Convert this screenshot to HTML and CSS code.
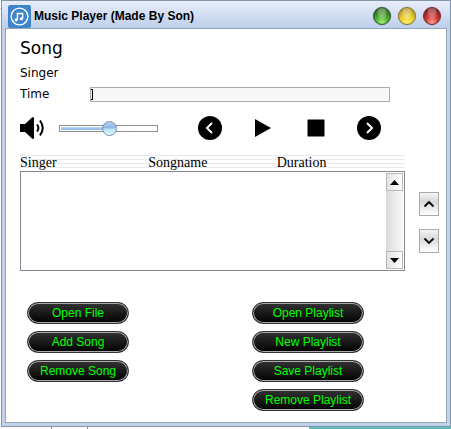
FILE: index.html
```html
<!DOCTYPE html>
<html lang="en">
<head>
<meta charset="utf-8">
<title>Music Player (Made By Son)</title>
<link rel="stylesheet" href="styles.css">
</head>
<body>
<main class="window">
  <header class="titlebar">
    <svg class="logo" viewBox="0 0 22 22" aria-hidden="true">
      <rect width="22" height="22" rx="2" fill="#3f85cb"/>
      <circle cx="11" cy="11" r="8" fill="none" stroke="#fff" stroke-width="1.3"/>
      <path d="M9 14V8.200H14V13" fill="none" stroke="#fff" stroke-width="1.4"/>
      <circle cx="7.800" cy="14.200" r="1.500" fill="#fff"/>
      <circle cx="12.800" cy="13.200" r="1.500" fill="#fff"/>
    </svg>
    <h1 class="title">Music Player (Made By Son)</h1>
    <div class="lights">
      <button class="light green" aria-label="Minimize"></button>
      <button class="light yellow" aria-label="Maximize"></button>
      <button class="light red" aria-label="Close"></button>
    </div>
  </header>
  <div class="content">
    <h2 class="song">Song</h2>
    <p class="singer">Singer</p>
    <div class="time-row">
      <label for="time">Time</label>
      <input class="time" id="time" type="text">
    </div>
    <div class="transport">
      <svg class="volume-icon" viewBox="0 0 25 24" aria-hidden="true">
        <path d="M0 8h5l7-6.500q2-1.500 2 1v19q0 2.500-2 1L5 16H0z"/>
        <path d="M17 8.500q2.800 3.500 0 7M20 4.500q5.500 7.500 0 15" fill="none" stroke="#000" stroke-width="2"/>
      </svg>
      <input class="volume" type="range" min="0" max="100" value="51" aria-label="Volume">
      <button class="control previous" aria-label="Previous">
        <svg viewBox="0 0 24 24"><circle cx="12" cy="12" r="12"/><path d="M14 7l-5 5 5 5" fill="none" stroke="#fff" stroke-width="2"/></svg>
      </button>
      <button class="control" aria-label="Play">
        <svg viewBox="0 0 24 24"><path d="M4 3l16 9-16 9z"/></svg>
      </button>
      <button class="control" aria-label="Stop">
        <svg viewBox="0 0 24 24"><path d="M3.500 3.500h17v17h-17z"/></svg>
      </button>
      <button class="control" aria-label="Next">
        <svg viewBox="0 0 24 24"><circle cx="12" cy="12" r="12"/><path d="M10 7l5 5-5 5" fill="none" stroke="#fff" stroke-width="2"/></svg>
      </button>
    </div>
    <section class="playlist">
      <div class="list">
        <table class="columns">
          <thead><tr><th>Singer</th><th>Songname</th><th>Duration</th></tr></thead>
        </table>
        <div class="rows">
          <div class="scrollbar">
            <button class="scroll" aria-label="Scroll up"><svg viewBox="0 0 9 5"><path d="M0 5L4.500 0 9 5z"/></svg></button>
            <button class="scroll" aria-label="Scroll down"><svg viewBox="0 0 9 5"><path d="M0 0L4.500 5 9 0z"/></svg></button>
          </div>
        </div>
      </div>
      <div class="movers">
        <button class="mover" aria-label="Move up"><svg viewBox="0 0 10 6"><path d="M.5 5.500L5 1l4.500 4.500"/></svg></button>
        <button class="mover" aria-label="Move down"><svg viewBox="0 0 10 6"><path d="M.5 .5L5 5 9.500 .5"/></svg></button>
      </div>
    </section>
    <section class="actions">
      <div class="group files">
        <button class="action">Open File</button>
        <button class="action">Add Song</button>
        <button class="action">Remove Song</button>
      </div>
      <div class="group playlists">
        <button class="action">Open Playlist</button>
        <button class="action">New Playlist</button>
        <button class="action">Save Playlist</button>
        <button class="action">Remove Playlist</button>
      </div>
    </section>
  </div>
</main>
</body>
</html>
```
FILE: styles.css
```css
* {
  box-sizing: border-box;
}

html {
  background:
    linear-gradient(#5fbcb4, #5fbcb4) 309px 100% / 100% 2px no-repeat,
    linear-gradient(#888, #888) 51px 100% / 1px 2px no-repeat,
    linear-gradient(#888, #888) 87px 100% / 1px 2px no-repeat,
    linear-gradient(#ccc, #ccc) 0 8px / 1px 1px no-repeat,
    #fff;
}

body {
  margin: 0;
  padding: 0 0 2px 1px;
  min-height: 100vh;
  display: flex;
  font: 12px/16px "DejaVu Sans", Verdana, sans-serif;
  color: #000;
}

button,
input {
  margin: 0;
  padding: 0;
  font: inherit;
}

.window {
  flex: 1;
  display: flex;
  flex-direction: column;
  padding: 0 3px 3px;
  border: 1px solid #8395a8;
  background: linear-gradient(#e9edfa, #bccfea 27px, #c0d1ec 27px);
}

.titlebar {
  display: flex;
  align-items: center;
  height: 27px;
  padding: 3px 6px 0 3px;
}

.logo {
  width: 23px;
  height: 23px;
}

.title {
  flex: 1;
  margin: 0 0 0 3px;
  font: bold 12px/16px "Liberation Sans", Arial, sans-serif;
}

.lights {
  display: flex;
  gap: 7px;
}

.light {
  width: 18px;
  height: 18px;
  border: 1px solid;
  border-radius: 50%;
  box-shadow: 0 0 1px rgba(90, 100, 120, 0.6);
}

.green {
  border-color: #2b5724;
  background:
    radial-gradient(ellipse at 50% 20%, rgba(255, 255, 255, 0.3) 0 25%, transparent 50%),
    radial-gradient(circle at 50% 90%, #a1f078, #4faa31 40%, #245f1c 85%);
}

.yellow {
  border-color: #8b7429;
  background:
    radial-gradient(ellipse at 50% 20%, rgba(255, 255, 255, 0.3) 0 25%, transparent 50%),
    radial-gradient(circle at 50% 90%, #fff060, #ecd138 40%, #a8871c 90%);
}

.red {
  border-color: #722323;
  background:
    radial-gradient(ellipse at 50% 20%, rgba(255, 255, 255, 0.3) 0 25%, transparent 50%),
    radial-gradient(circle at 50% 90%, #ff9f87, #cc3a36 40%, #7c1517 85%);
}

.content {
  flex: 1;
  padding: 9px 7px 11px 14px;
  border: 1px solid #96a6b8;
  background: #fff;
}

.song {
  margin: 0;
  font-size: 17px;
  font-weight: normal;
  line-height: 20px;
}

.singer {
  margin: 7px 0 6px;
}

.time-row {
  display: flex;
  height: 15px;
  margin-right: 49px;
}

.time-row label {
  width: 70px;
  line-height: 14px;
}

.time {
  flex: 1;
  min-width: 0;
  height: 15px;
  border: 1px solid #aaa;
  background:
    linear-gradient(#000, #000) 1px 1px / 1px 11px no-repeat,
    linear-gradient(#000, #000) 0 1px / 2px 1px no-repeat,
    linear-gradient(#000, #000) 0 11px / 2px 1px no-repeat,
    #f7f7f7;
}

.transport {
  display: flex;
  align-items: center;
  gap: 29px;
  height: 24px;
  margin-top: 14px;
}

.volume-icon {
  width: 25px;
  height: 24px;
  margin-right: -15px;
}

.volume {
  appearance: none;
  width: 99px;
  height: 15px;
  background: none;
}

.volume::-webkit-slider-runnable-track {
  height: 7px;
  border: 1px solid #8d8d8d;
  background:
    linear-gradient(#b9d9f5, #86b4e0) 1px 1px / 48px 3px no-repeat,
    #fff;
}

.volume::-webkit-slider-thumb {
  appearance: none;
  width: 15px;
  height: 15px;
  margin-top: -5px;
  border: 1px solid #7f8fa3;
  border-radius: 50%;
  background: linear-gradient(#b5d2f1, #8bb9e5 45%, #b9e4f6 55%, #d5fbff);
}

.control {
  width: 24px;
  height: 24px;
  border: 0;
  background: none;
}

.control svg {
  display: block;
}

.previous {
  margin-left: 11px;
}

.playlist {
  display: flex;
  gap: 14px;
  margin-top: 14px;
}

.list {
  flex: 1;
}

.columns {
  width: 100%;
  height: 17px;
  border-collapse: collapse;
  table-layout: fixed;
  background: repeating-linear-gradient(transparent 0 1px, #ebebeb 1px 2px, transparent 2px 4px);
}

.columns th {
  padding: 0;
  font: 14px/17px "Liberation Serif", "Times New Roman", serif;
  text-align: left;
}

.rows {
  display: flex;
  justify-content: flex-end;
  height: 100px;
  padding: 1px;
  border: 1px solid #85858f;
}

.scrollbar {
  display: flex;
  flex-direction: column;
  justify-content: space-between;
  width: 17px;
  background: linear-gradient(90deg, #dadada, #f8f8f8);
}

.scroll {
  display: flex;
  align-items: center;
  justify-content: center;
  height: 18px;
  border: 1px solid #b8b8b8;
  background: linear-gradient(90deg, #e2e2e2, #fff);
}

.scroll svg {
  width: 9px;
  height: 5px;
}

.movers {
  display: flex;
  flex-direction: column;
  gap: 13px;
  padding-top: 38px;
}

.mover {
  display: flex;
  align-items: center;
  justify-content: center;
  width: 20px;
  height: 24px;
  border: 1px solid #aaa;
  background: linear-gradient(#f4f4f4, #d8d8d8 40%, #fff);
}

.mover svg {
  width: 10px;
  height: 6px;
  overflow: visible;
  fill: none;
  stroke: #000;
  stroke-width: 1.8;
}

.actions {
  display: flex;
  gap: 123px;
  margin-top: 31px;
  padding-left: 7px;
}

.group {
  display: flex;
  flex-direction: column;
  gap: 7px;
}

.files {
  width: 102px;
}

.playlists {
  width: 112px;
}

.action {
  height: 22px;
  border: 1px solid #333;
  border-radius: 11px;
  box-shadow: inset 0 0 0 1px #aaa;
  background: linear-gradient(#333, #000);
  color: #0f0;
  font: 12px/16px "Liberation Sans", Arial, sans-serif;
  white-space: nowrap;
}
```
